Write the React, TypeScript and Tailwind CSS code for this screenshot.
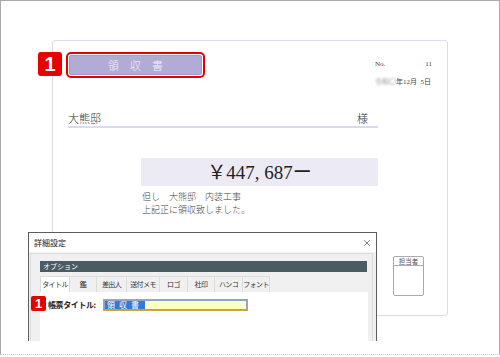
import { X } from 'lucide-react';

const tabs = ['タイトル', '鑑', '差出人', '送付メモ', 'ロゴ', '社印', 'ハンコ', 'フォント'];
const tabWidths = ['w-[30px]', 'w-[27px]', 'w-[30px]', 'w-[33px]', 'w-[28px]', 'w-[27px]', 'w-[28px]', 'w-[27px]'];

export default function App() {
  return (
    <div className="relative w-[500px] h-[357px] overflow-hidden bg-white font-['Liberation_Serif','Noto_Sans_CJK_JP',serif] text-[#333]">
      {/* outer frame */}
      <div className="h-[354px] border-l border-t border-r border-[#a9a9a9] pt-[39px] pl-[51px]">
        {/* receipt document */}
        <div className="w-[396px] h-[276px] rounded-[3px] border border-[#dcd9f0] pt-[11px] pl-[13px]">
          <div className="flex items-start h-[26px]">
            <div className="w-[139px] h-[26px] rounded-[5px] border-2 border-[#e00000] p-px">
              <div className="h-full rounded-[2px] border border-[#a39bcc] bg-[#b1abd6] flex items-center justify-center">
                <span className="text-[11px] leading-none tracking-[11px] pl-[11px] text-[#f2f2f8] font-['Noto_Sans_CJK_JP',sans-serif] font-light">領収書</span>
              </div>
            </div>
            <div className="ml-[170px] w-[59px] pt-[8px] text-[7px] leading-[8px] text-[#444]">
              <div className="flex justify-between">
                <span>No.</span>
                <span className="pr-[2px]">11</span>
              </div>
              <div className="mt-[10px] flex items-center whitespace-nowrap">
                <span className="blur-[1.2px] text-[#999]">令和〇</span>
                <span>年12月&nbsp;&nbsp;5日</span>
              </div>
            </div>
          </div>

          <div className="ml-[2px] mt-[34px] w-[310px] flex justify-between items-end border-b-2 border-[#dcd9f0] pb-[1px] pr-[10px] text-[11px] leading-[13px] font-['Noto_Sans_CJK_JP',sans-serif] font-light">
            <span>大熊邸</span>
            <span>様</span>
          </div>

          <div className="flex items-start">
            <div className="ml-[75px] mt-[30px] w-[237px]">
              <div className="h-[28px] bg-[#ecebf5] flex items-center justify-center text-[19px] leading-none text-[#222]">
                ￥447, 687ー
              </div>
              <div className="mt-[4px] pl-[1px] text-[9px] leading-[13px] text-[#444] font-['Noto_Sans_CJK_JP',sans-serif] font-light">
                <div>但し　大熊邸　内装工事</div>
                <div>上記正に領収致しました。</div>
              </div>
            </div>
            <div className="ml-[15px] mt-[128px] w-[31px] h-[40px] rounded-[2px] border border-[#aaa]">
              <div className="h-[9px] border-b border-[#aaa] text-[6.5px] leading-[9px] text-center text-[#555] font-['Noto_Sans_CJK_JP',sans-serif]">担当者</div>
            </div>
          </div>
        </div>
      </div>
      <div className="border-t border-dotted border-[#c8c8c8]" />

      {/* red marker on title */}
      <div className="absolute left-[38px] top-[52px] w-[24px] h-[24px] rounded-[3px] bg-[#e60000] flex items-center justify-center text-white text-[20px] font-bold leading-none font-['Liberation_Sans',sans-serif]">
        1
      </div>

      {/* settings dialog */}
      <div className="absolute left-[28px] top-[232px] w-[349px] h-[109px] border-l border-t border-r border-[#5c5c5c] bg-white flex flex-col font-['Noto_Sans_CJK_JP',sans-serif]">
        <div className="h-[19px] flex items-center justify-between pl-[5px] pr-[4px] text-[8px] text-[#222]">
          <span>詳細設定</span>
          <X size={10} strokeWidth={1.5} className="text-[#333]" />
        </div>
        <div className="flex-1 bg-[#f0f0f0] pl-px pr-[3px] flex flex-col">
          <div className="flex-1 mt-[1px] border-t border-l border-r border-[#dcdcdc] pl-[9px] pr-[4px] pt-[7px] flex flex-col">
            <div className="w-[327px] h-[11px] bg-[#4b5b63] text-white text-[7px] leading-[11px] pl-[3px]">オプション</div>
            <div className="mt-[4px] flex h-[16px]">
              {tabs.map((t, i) => (
                <div
                  key={t}
                  className={
                    (i === 0
                      ? 'bg-white border-t border-l border-r border-[#dcdcdc] '
                      : 'bg-[#f0f0f0] border-t border-r border-[#dcdcdc] ') +
                    tabWidths[i] +
                    ' flex items-center justify-center whitespace-nowrap overflow-hidden text-[7px] tracking-[-0.6px] text-[#333]'
                  }
                >
                  {t}
                </div>
              ))}
            </div>
            <div className="flex-1 w-[328px] bg-white pt-[7px] pl-[8px]">
              <div className="flex items-center h-[12px]">
                <span className="w-[55px] whitespace-nowrap text-[8px] tracking-[-0.4px] font-bold text-[#222]">帳票タイトル:</span>
                <div className="w-[145px] h-[12px] border border-[#c9a83a] outline outline-1 outline-[#8fa3c4] -outline-offset-2 bg-[#ffffc2] flex items-center pl-[1px]">
                  <span className="bg-[#3478d8] text-white text-[8px] leading-[10px] px-[2px] tracking-[4px]">領収書</span>
                </div>
              </div>
            </div>
          </div>
        </div>
        {/* red marker on field */}
        <div className="absolute left-[2px] top-[63px] w-[15px] h-[15px] rounded-[2px] bg-[#e60000] flex items-center justify-center text-white text-[13px] font-bold leading-none font-['Liberation_Sans',sans-serif]">
          1
        </div>
      </div>
    </div>
  );
}
